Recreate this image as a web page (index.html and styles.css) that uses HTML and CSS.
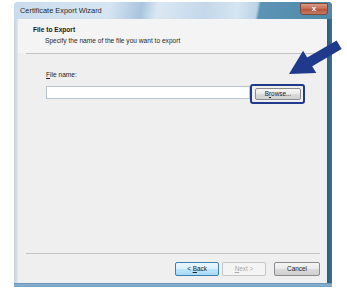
FILE: index.html
```html
<!DOCTYPE html>
<html lang="en">
<head>
 <meta charset="UTF-8">
 <title>Certificate Export Wizard</title>
 <link rel="stylesheet" href="styles.css">
</head>
<body>
 <div class="window">
 <div class="titlebar">
 <span class="title">Certificate Export Wizard</span>
 <span class="close">x</span>
 </div>
 <div class="client">
 <div class="header">
 <p class="heading">File to Export</p>
 <p class="subheading">Specify the name of the file you want to export</p>
 </div>
 <div class="rule"></div>
 <div class="content">
 <label for="file"><u>F</u>ile name:</label>
 <div class="file-row">
 <input type="text" id="file">
 <div class="highlight">
 <button class="btn">B<u>r</u>owse...</button>
 </div>
 </div>
 </div>
 <div class="rule bottom-rule"></div>
 <div class="actions">
 <button class="btn default">&lt; <u>B</u>ack</button>
 <button class="btn disabled"><u>N</u>ext &gt;</button>
 <button class="btn cancel">Cancel</button>
 </div>
 </div>
 <div class="frame-bottom"></div>
 </div>
 <svg class="arrow" width="347" height="290" viewBox="0 0 347 290">
 <polygon points="289,74 303.1,50.7 307.2,57.6 336.6,40.5 341.6,49.1 312.2,66.2 316.3,73.1" fill="#1f3a8c"/>
 </svg>
</body>
</html>
```

FILE: styles.css
```css
body {
    margin: 0;
    background: #fff;
    font-family: "Liberation Sans", Arial, sans-serif;
    width: 347px;
    height: 290px;
    overflow: hidden;
}

.window {
    margin: 2px 0 0 14px;
    width: 318px;
    height: 285px;
    display: flex;
    flex-direction: column;
    border-radius: 4px 4px 0 0;
    background: linear-gradient(to right, #c6d3df 0, #dbe6ef 4px, #dbe6ef 313px, #2f5d7c 313px, #3b6f93 318px);
}

.titlebar {
    height: 17px;
    display: flex;
    align-items: center;
    padding: 0 4px 0 6px;
    border-radius: 4px 4px 0 0;
    background: linear-gradient(100deg, #c9dced 0, #d6e5f2 30%, #a9c5de 40%, #dbe8f3 45%, #c3d8ea 60%, #d5e5f1 70%, #bcd3e7 76%, #5b94b4 77%, #4f88a9 100%);
}

.title {
    font-size: 7.4px;
    color: #2a2a2a;
    flex: 1;
}

.close {
    width: 26px;
    height: 10px;
    margin-top: -3px;
    border: 1px solid #7a4a3c;
    border-radius: 0 0 3px 3px;
    background: linear-gradient(#d99a82, #c46a4e 50%, #b2553a 51%, #c77b60);
    color: #fff;
    font-size: 8px;
    font-weight: bold;
    line-height: 9px;
    text-align: center;
}

.client {
    margin: 0 5px 0 4px;
    flex: 1;
    background: #efefef;
    display: flex;
    flex-direction: column;
}

.frame-bottom {
    height: 4px;
    background: linear-gradient(#5f8db3, #8fb4d2 50%, #6e9abd);
}

.header {
    height: 34px;
    background: #f4f4f4;
    padding: 7px 0 0 15px;
    box-sizing: border-box;
}

.heading {
    margin: 0;
    font-size: 6.6px;
    font-weight: bold;
    color: #1a1a1a;
}

.subheading {
    margin: 4px 0 0 12px;
    font-size: 6.6px;
    color: #2a2a2a;
}

.rule {
    height: 1px;
    margin-left: 8px;
    background: #c3c3c3;
}

.content {
    flex: 1;
    padding: 17px 0 0 28px;
}

label {
    display: block;
    font-size: 6.6px;
    color: #222;
    margin-bottom: 3px;
}

.file-row {
    display: flex;
    align-items: center;
    margin-top: -1px;
}

input {
    width: 204px;
    height: 13px;
    box-sizing: border-box;
    border: 1px solid #b9c4d1;
    background: #fff;
    padding: 0;
}

.highlight {
    border: 2px solid #1f3a8c;
    border-radius: 3px;
    padding: 2px 2px 2px 3px;
    margin-top: 4px;
}

.btn {
    display: block;
    height: 12px;
    padding: 0;
    width: 46px;
    font-family: "Liberation Sans", Arial, sans-serif;
    font-size: 6.4px;
    color: #222;
    border: 1px solid #8c8c8c;
    border-radius: 2px;
    background: linear-gradient(#f5f5f5, #e9e9e9 50%, #dcdcdc 51%, #cfcfcf);
    line-height: 10px;
}

.bottom-rule {
    margin-right: 7px;
}

.actions {
    display: flex;
    justify-content: flex-end;
    padding: 8px 7px 7px 0;
    gap: 3px;
}

.actions .btn {
    height: 14px;
    width: 44px;
}

.actions .default {
    border-color: #3c7fb1;
    background: linear-gradient(#eaf6fd, #d9f0fc 50%, #bee6fd 51%, #a7d9f5);
}

.actions .disabled {
    color: #a8a8a8;
    border-color: #c6c6c6;
    background: #f4f4f4;
}

.actions .cancel {
    margin-left: 5px;
    width: 46px;
}

.arrow {
    position: absolute;
    left: 0;
    top: 0;
}
```
